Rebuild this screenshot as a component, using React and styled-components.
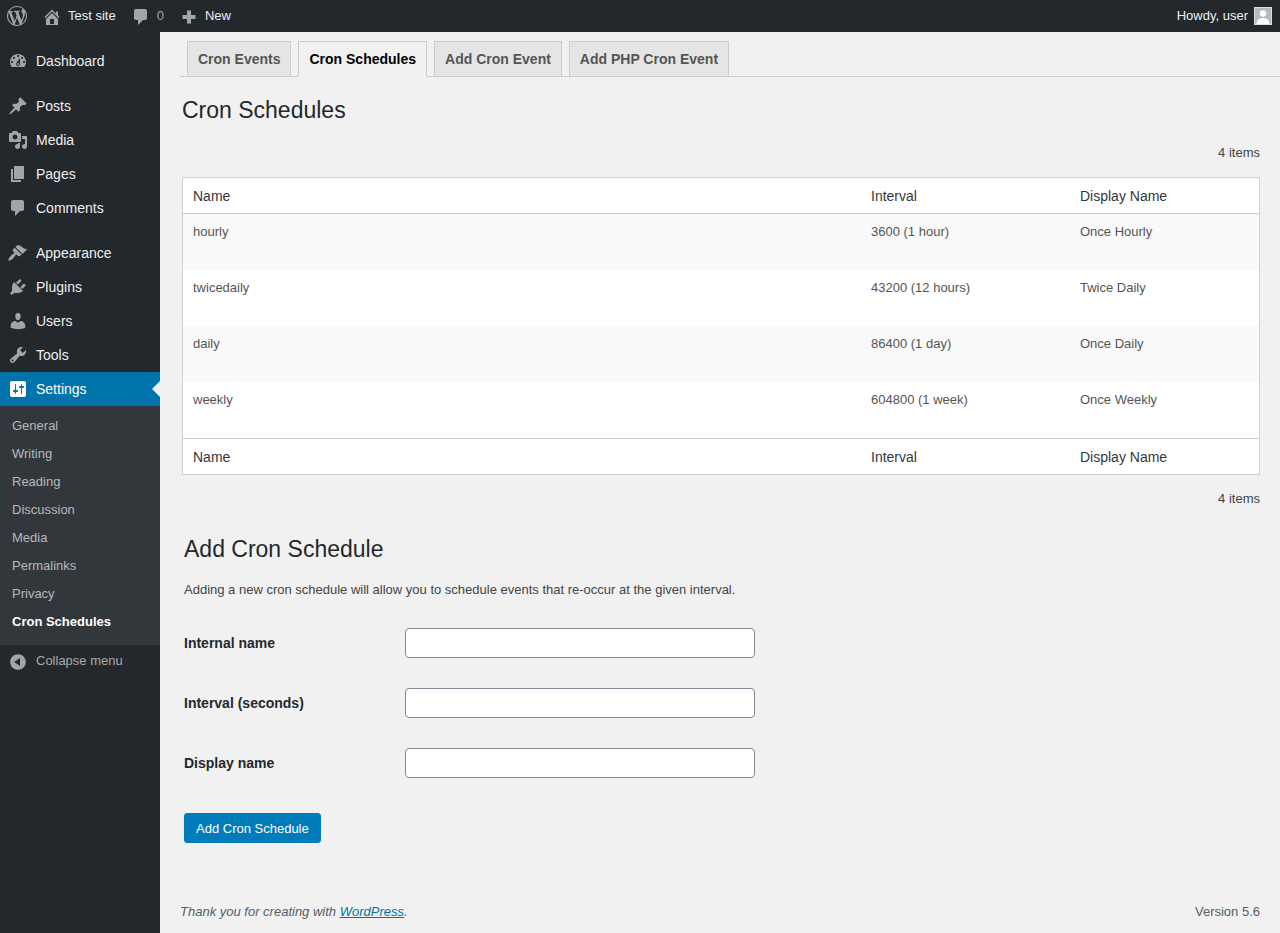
import React from 'react';
import styled, { createGlobalStyle } from 'styled-components';

const GlobalStyle = createGlobalStyle`
  html, body {
    margin: 0;
    padding: 0;
    background: #f1f1f1;
    font-family: "Liberation Sans", Arial, sans-serif;
    font-size: 13px;
    color: #444;
  }
`;

const icons = {
  wordpress: 'M20 10c0-5.51-4.49-10-10-10C4.48 0 0 4.49 0 10c0 5.52 4.48 10 10 10 5.51 0 10-4.48 10-10zM7.78 15.37L4.37 6.22c.55-.02 1.17-.08 1.17-.08.5-.06.44-1.13-.06-1.11 0 0-1.45.11-2.37.11-.18 0-.37 0-.58-.01C4.12 2.69 6.87 1.11 10 1.11c2.33 0 4.45.87 6.05 2.34-.68-.11-1.65.39-1.65 1.58 0 .74.45 1.36.9 2.1.35.61.55 1.36.55 2.46 0 1.49-1.4 5-1.4 5l-3.03-8.37c.54-.02.82-.17.82-.17.5-.05.44-1.25-.06-1.22 0 0-1.44.12-2.38.12-.87 0-2.33-.12-2.33-.12-.5-.03-.56 1.2-.06 1.22l.92.08 1.26 3.41zM17.41 10c.24-.64.74-1.87.43-4.25.7 1.29 1.05 2.71 1.05 4.25 0 3.29-1.73 6.24-4.4 7.78.97-2.59 1.94-5.2 2.92-7.78zM6.1 18.09C3.12 16.65 1.11 13.53 1.11 10c0-1.3.23-2.48.72-3.59C3.25 10.3 4.67 14.2 6.1 18.09zm4.03-6.63l2.58 6.98c-.86.29-1.76.45-2.71.45-.79 0-1.57-.11-2.29-.33.81-2.38 1.62-4.74 2.42-7.1z',
  home: 'M16 8.5l1.53 1.53-1.06 1.06L10 4.62l-6.47 6.47-1.06-1.06L10 2.5l4 4v-2h2v4zm-6-2.46l6 5.99V18H4v-5.97zM12 17v-5H8v5h4z',
  comment: 'M5 2h9c1.1 0 2 .9 2 2v7c0 1.1-.9 2-2 2h-2l-5 5v-5H5c-1.1 0-2-.9-2-2V4c0-1.1.9-2 2-2z',
  plus: 'M8 3.5h4V8h4.5v4H12v4.5H8V12H3.5V8H8z',
  dashboard: 'M3.76 16h12.48c1.1-1.37 1.76-3.11 1.76-5 0-4.42-3.58-8-8-8s-8 3.58-8 8c0 1.89.66 3.63 1.76 5zM10 4c.55 0 1 .45 1 1s-.45 1-1 1-1-.45-1-1 .45-1 1-1zM6 6c.55 0 1 .45 1 1s-.45 1-1 1-1-.45-1-1 .45-1 1-1zm8 0c.55 0 1 .45 1 1s-.45 1-1 1-1-.45-1-1 .45-1 1-1zm-5.37 5.55L12 7v6c0 1.1-.9 2-2 2s-2-.9-2-2c0-.57.24-1.08.63-1.45zM4 10c.55 0 1 .45 1 1s-.45 1-1 1-1-.45-1-1 .45-1 1-1zm12 0c.55 0 1 .45 1 1s-.45 1-1 1-1-.45-1-1 .45-1 1-1zm-5 3c0-.55-.45-1-1-1s-1 .45-1 1 .45 1 1 1 1-.45 1-1z',
  post: 'M10.44 3.02l1.82-1.82 6.36 6.35-1.83 1.82c-1.05-.68-2.48-.57-3.41.36l-.75.75c-.92.93-1.04 2.35-.35 3.41l-1.83 1.82-2.41-2.41-2.8 2.79c-.42.42-3.38 2.71-3.8 2.29s1.86-3.39 2.28-3.81l2.79-2.79L4.1 9.36l1.83-1.82c1.05.69 2.48.57 3.4-.36l.75-.75c.93-.92 1.05-2.35.36-3.41z',
  media: 'M13 11V4c0-.55-.45-1-1-1h-1.67L9 1H5L3.67 3H2c-.55 0-1 .45-1 1v7c0 .55.45 1 1 1h10c.55 0 1-.45 1-1zM7 4.5c1.38 0 2.5 1.12 2.5 2.5S8.38 9.5 7 9.5 4.5 8.38 4.5 7 5.62 4.5 7 4.5zM14 6h5v10.5c0 1.38-1.12 2.5-2.5 2.5S14 17.88 14 16.5s1.12-2.5 2.5-2.5c.17 0 .34.02.5.05V9h-3V6zm-4 8.05V13h2v3.5c0 1.38-1.12 2.5-2.5 2.5S7 17.88 7 16.5 8.12 14 9.5 14c.17 0 .34.02.5.05z',
  page: 'M6 15V2h10v13H6zm-1 1h8v2H3V5h2v11z',
  appearance: 'M14.48 11.06L7.41 3.99l1.5-1.5c.5-.56 2.3-.47 3.51.32 1.21.8 1.43 1.28 2.91 2.1 1.18.64 2.45 1.26 4.45.85zm-.71.71L6.7 4.7 4.93 6.47c-.39.39-.39 1.02 0 1.41l1.06 1.06c.39.39.39 1.03 0 1.42-.6.6-1.43 1.11-2.21 1.69-.35.26-.7.53-1.01.84-1.43 1.43-2.98 3.9-2.25 4.63s3.2-.82 4.63-2.25c.31-.31.58-.66.84-1.01.58-.78 1.09-1.61 1.69-2.21.39-.39 1.02-.39 1.41 0l1.06 1.06c.39.39 1.02.39 1.41 0z',
  plugins: 'M13.11 4.36L9.87 7.6 8 5.73l3.24-3.24c.35-.34 1.05-.2 1.56.32.52.51.66 1.21.31 1.55zm-8 1.77l.91-1.12 9.01 9.01-1.19.84c-.71.71-2.63 1.16-3.82 1.16H6.14L4.9 17.26c-.59.59-1.54.59-2.12 0-.59-.58-.59-1.53 0-2.12l1.24-1.24v-3.88c0-1.13.4-3.19 1.09-3.89zm7.26 3.97l3.24-3.24c.34-.35 1.04-.21 1.55.31.52.51.66 1.21.31 1.55l-3.24 3.25z',
  users: 'M10 9.25c-2.27 0-2.73-3.44-2.73-3.44C7 4.02 7.82 2 9.97 2c2.16 0 2.98 2.02 2.71 3.81 0 0-.41 3.44-2.68 3.44zm0 2.57L12.72 10c2.39 0 4.52 2.33 4.52 4.53v2.49s-3.65 1.13-7.24 1.13c-3.65 0-7.24-1.13-7.24-1.13v-2.49c0-2.25 1.94-4.48 4.47-4.48z',
  tools: 'M16.68 9.77c-1.34 1.34-3.3 1.67-4.95.99l-5.41 6.52c-.99.99-2.59.99-3.58 0s-.99-2.59 0-3.57l6.52-5.42c-.68-1.65-.35-3.61.99-4.95 1.28-1.28 3.12-1.62 4.72-1.06l-2.89 2.89 2.82 2.82 2.86-2.87c.53 1.58.18 3.39-1.08 4.65zM3.81 16.21c.4.39 1.04.39 1.43 0 .4-.4.4-1.04 0-1.43-.39-.4-1.03-.4-1.43 0-.39.39-.39 1.03 0 1.43z',
  settings: 'M18 16V4c0-1.1-.9-2-2-2H4c-1.1 0-2 .9-2 2v12c0 1.1.9 2 2 2h12c1.1 0 2-.9 2-2zM8 11h1c.55 0 1 .45 1 1s-.45 1-1 1H8v1.5c0 .28-.22.5-.5.5s-.5-.22-.5-.5V13H6c-.55 0-1-.45-1-1s.45-1 1-1h1V5.5c0-.28.22-.5.5-.5s.5.22.5.5V11zm5-2h-1c-.55 0-1-.45-1-1s.45-1 1-1h1V5.5c0-.28.22-.5.5-.5s.5.22.5.5V7h1c.55 0 1 .45 1 1s-.45 1-1 1h-1v5.5c0 .28-.22.5-.5.5s-.5-.22-.5-.5V9z',
  collapse: 'M10 2.16c4.33 0 7.84 3.51 7.84 7.84s-3.51 7.84-7.84 7.84S2.16 14.33 2.16 10 5.71 2.16 10 2.16zm2 11.72V6.12L6.18 9.97z',
};

const Svg = styled.svg`
  display: block;
  flex: none;
  width: 20px;
  height: 20px;
  fill: ${(p) => p.$color || '#a0a5aa'};
  margin-left: ${(p) => p.$left || 0}px;
  margin-top: ${(p) => p.$top || 0}px;
`;

const Icon = ({ name, color, left, top }) => (
  <Svg viewBox="0 0 20 20" $color={color} $left={left} $top={top}>
    <path fillRule="evenodd" d={icons[name]} />
  </Svg>
);

const Page = styled.div`
  display: flex;
  flex-direction: column;
  min-height: 100vh;
`;

const AdminBar = styled.header`
  display: flex;
  align-items: center;
  flex: none;
  height: 32px;
  background: #23282d;
  color: #eee;
  line-height: 18px;
`;

const BarText = styled.span`
  margin-left: ${(p) => p.$left || 0}px;
  color: ${(p) => p.$color || '#eee'};
`;

const BarRight = styled.div`
  display: flex;
  align-items: center;
  margin-left: auto;
  padding-right: 8px;
`;

const Avatar = styled.svg`
  display: block;
  width: 18px;
  height: 18px;
  margin-left: 6px;
`;

const Body = styled.div`
  display: flex;
  flex: 1;
`;

const Sidebar = styled.nav`
  flex: none;
  width: 160px;
  padding-top: 12px;
  background: #23282d;
`;

const MenuItem = styled.div`
  position: relative;
  display: flex;
  align-items: center;
  height: 34px;
  margin-top: ${(p) => (p.$spaced ? 11 : 0)}px;
  padding-left: 8px;
  font-size: 14px;
  color: ${(p) => (p.$active ? '#fff' : '#eee')};
  background: ${(p) => (p.$active ? '#0073aa' : 'transparent')};
`;

const MenuLabel = styled.span`
  margin-left: 8px;
`;

const ActiveArrow = styled.span`
  position: absolute;
  right: 0;
  top: 9px;
  border: 8px solid transparent;
  border-left-width: 0;
  border-right-color: #f1f1f1;
`;

const SubMenu = styled.div`
  padding: 6px 0 9px;
  background: #32373c;
`;

const SubItem = styled.div`
  height: 28px;
  padding-left: 12px;
  line-height: 28px;
  font-size: 13px;
  font-weight: ${(p) => (p.$current ? 600 : 400)};
  color: ${(p) => (p.$current ? '#fff' : '#b4b9be')};
`;

const Collapse = styled.div`
  display: flex;
  align-items: flex-start;
  padding: 7px 0 0 8px;
  color: #aaa;
  line-height: 18px;
`;

const CollapseLabel = styled.span`
  margin-left: 8px;
`;

const Main = styled.main`
  display: flex;
  flex-direction: column;
  flex: 1;
  min-width: 0;
  padding-left: 20px;
`;

const TabBar = styled.div`
  display: flex;
  height: 35px;
  margin-top: 9px;
  border-bottom: 1px solid #ccc;
`;

const Tab = styled.div`
  box-sizing: border-box;
  height: 36px;
  margin-left: 7px;
  padding: 5px 10px;
  border: 1px solid #ccc;
  border-bottom-color: ${(p) => (p.$active ? '#f1f1f1' : '#ccc')};
  font-size: 14px;
  font-weight: 600;
  line-height: 24px;
  color: ${(p) => (p.$active ? '#000' : '#555')};
  background: ${(p) => (p.$active ? '#f1f1f1' : '#e5e5e5')};
`;

const Content = styled.div`
  padding: 0 20px 0 2px;
`;

const Title = styled.h1`
  margin: 18px 0 0;
  font-size: 23px;
  font-weight: 400;
  line-height: 30px;
  color: #23282d;
`;

const ItemCount = styled.div`
  margin: ${(p) => p.$margin};
  text-align: right;
  line-height: 18px;
  color: #444;
`;

const Table = styled.table`
  box-sizing: border-box;
  width: 100%;
  table-layout: fixed;
  border: 1px solid #ccd0d4;
  border-spacing: 0;
  background: #fff;
`;

const HeadCell = styled.th`
  box-sizing: border-box;
  width: ${(p) => p.$width || 'auto'};
  height: 36px;
  padding: 0 10px;
  border-bottom: ${(p) => (p.$foot ? 'none' : '1px solid #ccd0d4')};
  border-top: ${(p) => (p.$foot ? '1px solid #ccd0d4' : 'none')};
  text-align: left;
  font-size: 14px;
  font-weight: 400;
  color: #32373c;
`;

const Row = styled.tr`
  background: ${(p) => (p.$alt ? '#f9f9f9' : '#fff')};
`;

const Cell = styled.td`
  box-sizing: border-box;
  height: 56px;
  padding: 8px 10px;
  vertical-align: top;
  line-height: 19.5px;
  color: #555;
`;

const AddSection = styled.section`
  padding-left: 2px;
`;

const SectionTitle = styled.h2`
  margin: 26px 0 0;
  font-size: 23px;
  font-weight: 400;
  line-height: 30px;
  color: #23282d;
`;

const Intro = styled.p`
  margin: 17px 0 0;
  line-height: 18px;
  color: #444;
`;

const Form = styled.form`
  display: grid;
  grid-template-columns: 221px 350px;
  row-gap: 30px;
  align-items: center;
  margin-top: 29px;
`;

const Label = styled.label`
  font-size: 14px;
  font-weight: 600;
  color: #23282d;
`;

const TextInput = styled.input`
  box-sizing: border-box;
  width: 350px;
  height: 30px;
  padding: 0 8px;
  border: 1px solid #7e8993;
  border-radius: 4px;
  background: #fff;
`;

const SubmitButton = styled.button`
  display: block;
  height: 30px;
  margin-top: 35px;
  padding: 0 11px;
  border: 1px solid #007cba;
  border-radius: 3px;
  background: #007cba;
  color: #fff;
  font-family: inherit;
  font-size: 13px;
`;

const Footer = styled.footer`
  display: flex;
  justify-content: space-between;
  margin-top: auto;
  padding: 0 20px 12px 0;
  line-height: 18px;
  color: #555d66;
`;

const Thanks = styled.span`
  font-style: italic;
`;

const FooterLink = styled.a`
  color: #0073aa;
`;

const menuItems = [
  { name: 'dashboard', label: 'Dashboard' },
  { name: 'post', label: 'Posts', spaced: true },
  { name: 'media', label: 'Media' },
  { name: 'page', label: 'Pages' },
  { name: 'comment', label: 'Comments' },
  { name: 'appearance', label: 'Appearance', spaced: true },
  { name: 'plugins', label: 'Plugins' },
  { name: 'users', label: 'Users' },
  { name: 'tools', label: 'Tools' },
];

const subItems = ['General', 'Writing', 'Reading', 'Discussion', 'Media', 'Permalinks', 'Privacy'];

const tabs = ['Cron Events', 'Cron Schedules', 'Add Cron Event', 'Add PHP Cron Event'];

const schedules = [
  ['hourly', '3600 (1 hour)', 'Once Hourly'],
  ['twicedaily', '43200 (12 hours)', 'Twice Daily'],
  ['daily', '86400 (1 day)', 'Once Daily'],
  ['weekly', '604800 (1 week)', 'Once Weekly'],
];

const fields = ['Internal name', 'Interval (seconds)', 'Display name'];

const App = () => (
  <Page>
    <GlobalStyle />
    <AdminBar>
      <Icon name="wordpress" left={7} color="#a0a5aa" />
      <Icon name="home" left={15} top={1} />
      <BarText $left={6}>Test site</BarText>
      <Icon name="comment" left={15} top={2} />
      <BarText $left={6} $color="#a0a5aa">0</BarText>
      <Icon name="plus" left={15} top={1} />
      <BarText $left={6}>New</BarText>
      <BarRight>
        <BarText>Howdy, user</BarText>
        <Avatar viewBox="0 0 18 18">
          <rect width="18" height="18" fill="#ddd" />
          <rect x="1" y="1" width="16" height="16" fill="#b4b9be" />
          <circle cx="9" cy="6.5" r="3.2" fill="#fff" />
          <path d="M2.5 17c0-4 2.5-6 6.5-6s6.5 2 6.5 6z" fill="#fff" />
        </Avatar>
      </BarRight>
    </AdminBar>
    <Body>
      <Sidebar>
        {menuItems.map((item) => (
          <MenuItem key={item.label} $spaced={item.spaced}>
            <Icon name={item.name} />
            <MenuLabel>{item.label}</MenuLabel>
          </MenuItem>
        ))}
        <MenuItem $active>
          <Icon name="settings" color="#fff" />
          <MenuLabel>Settings</MenuLabel>
          <ActiveArrow />
        </MenuItem>
        <SubMenu>
          {subItems.map((label) => (
            <SubItem key={label}>{label}</SubItem>
          ))}
          <SubItem $current>Cron Schedules</SubItem>
        </SubMenu>
        <Collapse>
          <Icon name="collapse" top={0} />
          <CollapseLabel>Collapse menu</CollapseLabel>
        </Collapse>
      </Sidebar>
      <Main>
        <TabBar>
          {tabs.map((label) => (
            <Tab key={label} $active={label === 'Cron Schedules'}>{label}</Tab>
          ))}
        </TabBar>
        <Content>
          <Title>Cron Schedules</Title>
          <ItemCount $margin="19px 0 15px">4 items</ItemCount>
          <Table>
            <thead>
              <tr>
                <HeadCell $width="678px">Name</HeadCell>
                <HeadCell $width="209px">Interval</HeadCell>
                <HeadCell>Display Name</HeadCell>
              </tr>
            </thead>
            <tbody>
              {schedules.map((row, index) => (
                <Row key={row[0]} $alt={index % 2 === 0}>
                  {row.map((value) => (
                    <Cell key={value}>{value}</Cell>
                  ))}
                </Row>
              ))}
            </tbody>
            <tfoot>
              <tr>
                <HeadCell $foot>Name</HeadCell>
                <HeadCell $foot>Interval</HeadCell>
                <HeadCell $foot>Display Name</HeadCell>
              </tr>
            </tfoot>
          </Table>
          <ItemCount $margin="15px 0 0">4 items</ItemCount>
          <AddSection>
            <SectionTitle>Add Cron Schedule</SectionTitle>
            <Intro>Adding a new cron schedule will allow you to schedule events that re-occur at the given interval.</Intro>
            <Form>
              {fields.map((label) => (
                <React.Fragment key={label}>
                  <Label>{label}</Label>
                  <TextInput type="text" />
                </React.Fragment>
              ))}
            </Form>
            <SubmitButton type="button">Add Cron Schedule</SubmitButton>
          </AddSection>
        </Content>
        <Footer>
          <Thanks>Thank you for creating with <FooterLink href="#">WordPress</FooterLink>.</Thanks>
          <span>Version 5.6</span>
        </Footer>
      </Main>
    </Body>
  </Page>
);

export default App;
